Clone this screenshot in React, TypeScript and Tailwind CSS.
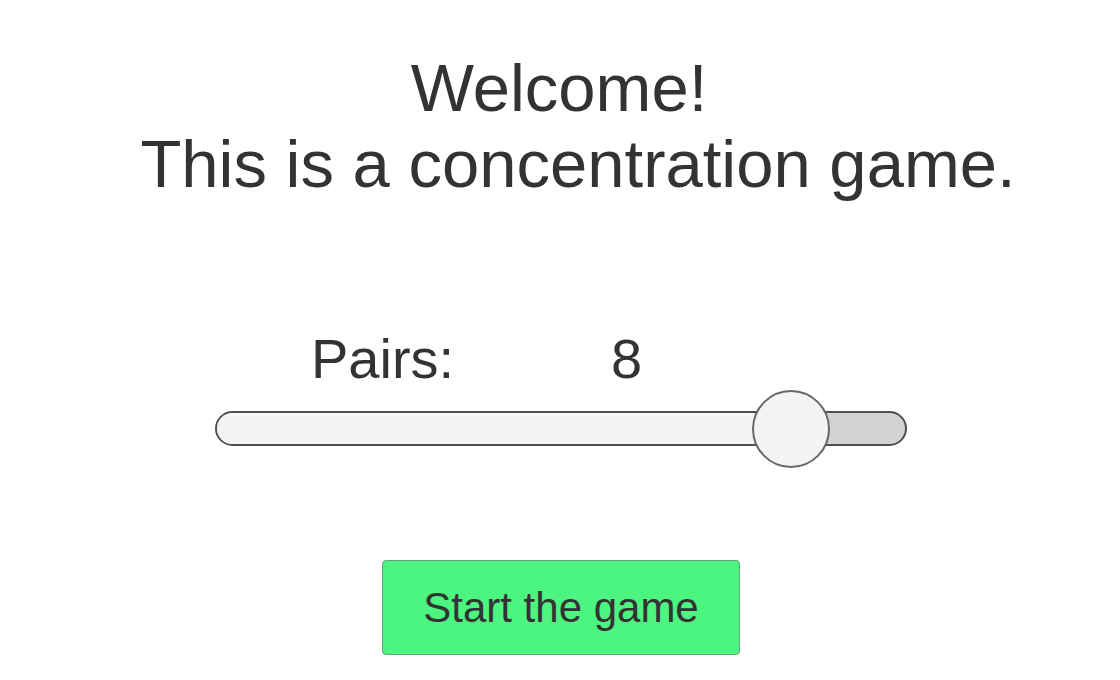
import { useState } from 'react'

const FONT = { fontFamily: '"Liberation Sans", Arial, sans-serif' }

function PairsSlider({ value, min, max }: { value: number; min: number; max: number }) {
  const pct = ((value - min) / (max - min)) * 100
  return (
    <div className="relative h-[35px] w-full rounded-full border-2 border-[#4f4f4f] bg-[#d3d3d3]">
      <div className="absolute inset-y-0 left-0 rounded-l-full bg-[#f4f4f4]" style={{ width: `${pct}%` }} />
      <div
        className="absolute top-1/2 h-[78px] w-[78px] -translate-x-1/2 -translate-y-1/2 rounded-full border-2 border-[#666666] bg-[#f3f3f3]"
        style={{ left: `${pct}%` }}
      />
    </div>
  )
}

export default function App() {
  const [pairs] = useState(8)

  return (
    <div className="flex h-[680px] w-[1120px] flex-col bg-white text-[#333333]" style={FONT}>
      <div className="mt-[50px] flex flex-col text-[67px] leading-[76px]">
        <div className="text-center pr-[2px]">Welcome!</div>
        <div className="text-center pl-[36px]">This is a concentration game.</div>
      </div>

      <div className="ml-[215px] mt-[125px] flex w-[692px] flex-col">
        <div className="relative h-[64px] text-[56px] leading-[64px]">
          <span className="absolute left-[96px] top-0">Pairs:</span>
          <span className="absolute left-[396px] top-0">{pairs}</span>
        </div>
        <div className="mt-[20px]">
          <PairsSlider value={pairs} min={0} max={9.59} />
        </div>
      </div>

      <div className="mt-[114px] flex justify-center pl-[2px]">
        <button className="flex h-[95px] w-[358px] items-center justify-center rounded-[4px] border border-[#6b9f7a] bg-[#4cf57f] text-[42px] text-[#333333]">
          Start the game
        </button>
      </div>
    </div>
  )
}
